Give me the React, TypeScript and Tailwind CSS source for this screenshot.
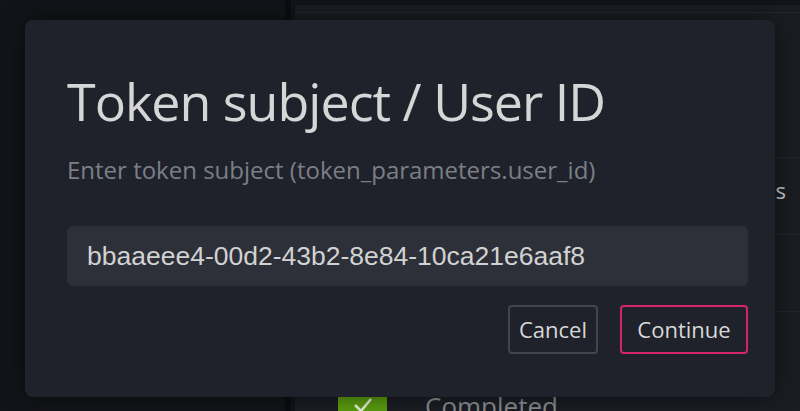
import { useState } from "react";

export default function App() {
  const [value, setValue] = useState("bbaaeee4-00d2-43b2-8e84-10ca21e6aaf8");

  return (
    <div className="relative w-[800px] h-[411px] overflow-hidden bg-[#131419] font-['Open_Sans',sans-serif]">
      {/* page behind the modal */}
      <div className="flex h-full">
        <div className="w-[285px] shrink-0 bg-[#131419]" />
        <div className="w-[6px] shrink-0 bg-[#0c0d10]" />
        <div className="flex-1 pt-[5px] pl-[4px]">
          <div className="h-full bg-[#1a1d23] flex flex-col">
            <div className="h-[8px] border-b border-[#23262d]" />
            <div className="h-[145px] border-b border-[#23262d]" />
            <div className="h-[77px] border-b border-[#23262d] flex items-start justify-end pt-[16px] pr-[14px] text-[22px] text-[#c8cacd]">
              s
            </div>
            <div className="h-[77px] border-b border-[#23262d]" />
            <div className="flex-1 flex items-end pl-[43px]">
              <div className="flex items-start gap-[38px] translate-y-[8px]">
                <div className="w-[49px] h-[22px] bg-[#5a9e0f] flex justify-center pt-[2px]">
                  <svg width="22" height="20" viewBox="0 0 22 20" fill="none">
                    <path d="M3 10 L9 16 L19 4" stroke="#e8f2dc" strokeWidth="2.5" />
                  </svg>
                </div>
                <span className="text-[26px] leading-none text-[#8a8d93]">Completed</span>
              </div>
            </div>
          </div>
        </div>
      </div>

      {/* modal */}
      <div className="absolute left-[25px] top-[20px] w-[750px] h-[377px] rounded-[8px] bg-[#1f222a] shadow-[0_0_24px_rgba(0,0,0,0.5)] pl-[42px] pr-[27px] pt-[55px]">
        <h1 className="text-[52px] leading-none font-normal text-[#d6d6d6] tracking-[-1px]">
          Token subject / User ID
        </h1>
        <p className="mt-[31px] text-[24px] leading-none text-[#7b7f87]">
          Enter token subject (token_parameters.user_id)
        </p>
        <input
          value={value}
          onChange={(e) => setValue(e.target.value)}
          className="mt-[44px] w-full h-[60px] rounded-[6px] bg-[#2d3038] px-[20px] text-[26.5px] text-[#d2d2d2] outline-none font-['Liberation_Sans',Arial,sans-serif]"
        />
        <div className="mt-[19px] flex justify-end gap-[22px]">
          <button className="w-[90px] h-[49px] rounded-[4px] border-2 border-[#41454d] text-[22px] text-[#d8d8d8]">
            Cancel
          </button>
          <button className="w-[128px] h-[49px] rounded-[4px] border-2 border-[#d3246c] text-[22px] text-[#d8d8d8]">
            Continue
          </button>
        </div>
      </div>
    </div>
  );
}
